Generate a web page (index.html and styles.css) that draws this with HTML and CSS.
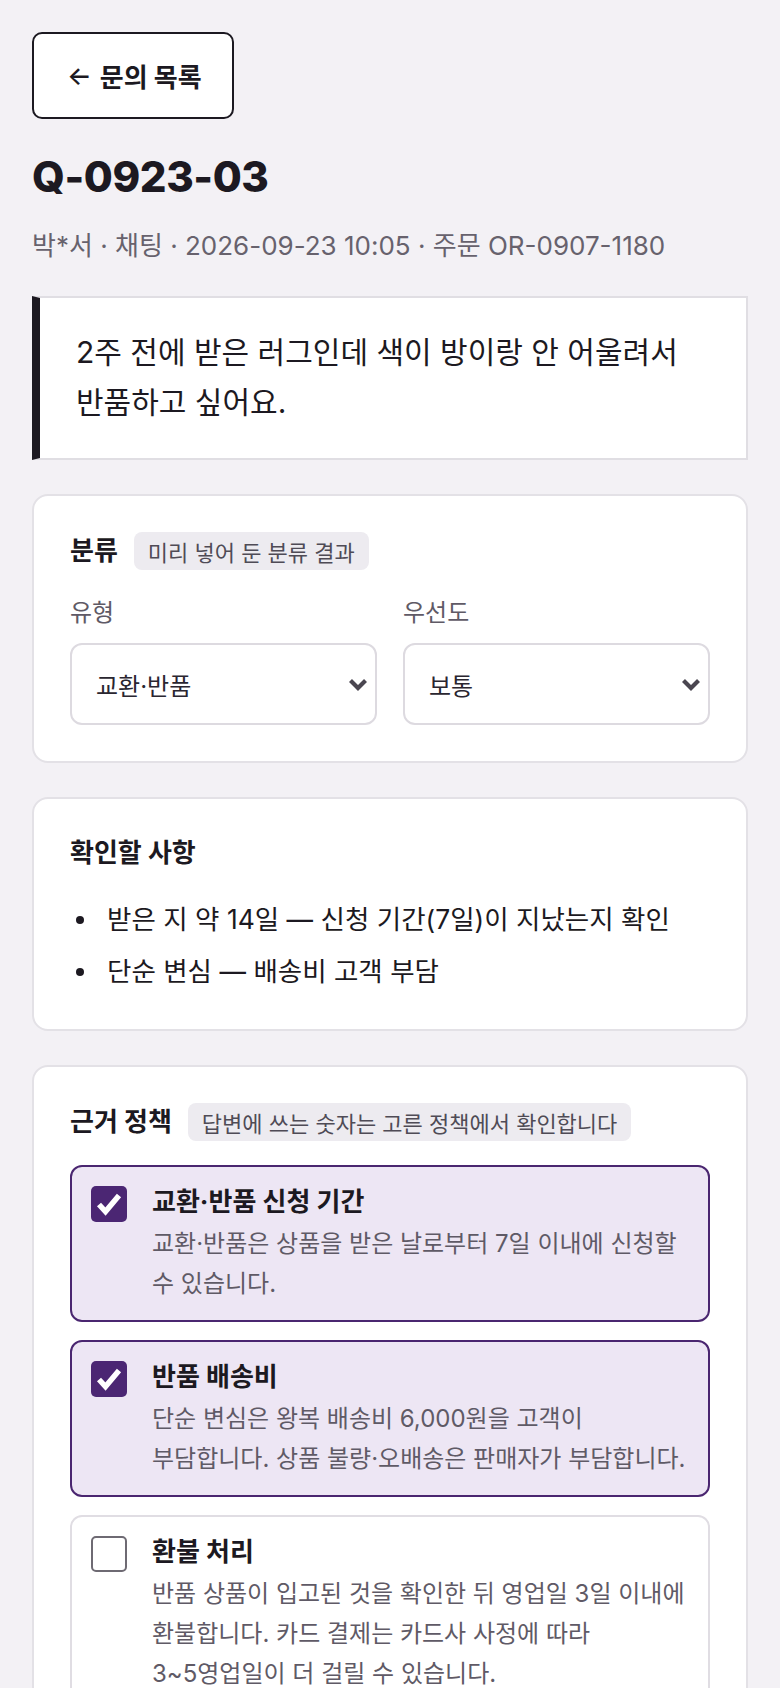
FILE: index.html
```html
<!DOCTYPE html>
<html lang="ko">
<head>
<meta charset="utf-8">
<title>Q-0923-03</title>
<link rel="stylesheet" href="styles.css">
</head>
<body>
<main class="page">
  <a class="back-btn" href="#"><span class="arrow">←</span> 문의 목록</a>
  <h1 class="ticket-id">Q-0923-03</h1>
  <p class="meta">박*서 · 채팅 · 2026-09-23 10:05 · 주문 OR-0907-1180</p>
  <blockquote class="message">2주 전에 받은 러그인데 색이 방이랑 안 어울려서 반품하고 싶어요.</blockquote>

  <section class="card">
    <div class="card-head">
      <h2 class="card-title">분류</h2>
      <span class="badge">미리 넣어 둔 분류 결과</span>
    </div>
    <div class="fields">
      <div class="field">
        <div class="field-label">유형</div>
        <div class="select">
          <span>교환·반품</span>
          <svg class="chev" width="20" height="13" viewBox="0 0 20 13"><polyline points="2.5,2.5 10,10 17.5,2.5" fill="none" stroke="#4a4650" stroke-width="4.2"/></svg>
        </div>
      </div>
      <div class="field">
        <div class="field-label">우선도</div>
        <div class="select">
          <span>보통</span>
          <svg class="chev" width="20" height="13" viewBox="0 0 20 13"><polyline points="2.5,2.5 10,10 17.5,2.5" fill="none" stroke="#4a4650" stroke-width="4.2"/></svg>
        </div>
      </div>
    </div>
  </section>

  <section class="card">
    <h2 class="card-title card-title-block">확인할 사항</h2>
    <ul class="checklist">
      <li>받은 지 약 14일 — 신청 기간(7일)이 지났는지 확인</li>
      <li>단순 변심 — 배송비 고객 부담</li>
    </ul>
  </section>

  <section class="card">
    <div class="card-head">
      <h2 class="card-title">근거 정책</h2>
      <span class="badge">답변에 쓰는 숫자는 고른 정책에서 확인합니다</span>
    </div>
    <div class="policies">
      <label class="policy is-checked">
        <span class="box"><svg width="36" height="36" viewBox="0 0 36 36"><polyline points="8,18.5 14.5,25.5 28,9.5" fill="none" stroke="#fff" stroke-width="5.5"/></svg></span>
        <span class="policy-body">
          <span class="policy-title">교환·반품 신청 기간</span>
          <span class="policy-desc">교환·반품은 상품을 받은 날로부터 7일 이내에 신청할 수 있습니다.</span>
        </span>
      </label>
      <label class="policy is-checked">
        <span class="box"><svg width="36" height="36" viewBox="0 0 36 36"><polyline points="8,18.5 14.5,25.5 28,9.5" fill="none" stroke="#fff" stroke-width="5.5"/></svg></span>
        <span class="policy-body">
          <span class="policy-title">반품 배송비</span>
          <span class="policy-desc">단순 변심은 왕복 배송비 6,000원을 고객이 부담합니다. 상품 불량·오배송은 판매자가 부담합니다.</span>
        </span>
      </label>
      <label class="policy">
        <span class="box"></span>
        <span class="policy-body">
          <span class="policy-title">환불 처리</span>
          <span class="policy-desc">반품 상품이 입고된 것을 확인한 뒤 영업일 3일 이내에 환불합니다. 카드 결제는 카드사 사정에 따라 3~5영업일이 더 걸릴 수 있습니다.</span>
        </span>
      </label>
    </div>
  </section>
</main>
</body>
</html>
```

FILE: styles.css
```css
* { box-sizing: border-box; }

html, body {
  margin: 0;
  padding: 0;
  background: #f3f1f5;
}

body {
  font-family: "Inter", "Noto Sans CJK KR", sans-serif;
  color: #1c1921;
  word-break: keep-all;
  overflow-wrap: break-word;
}

.page {
  display: flex;
  flex-direction: column;
  padding: 32px 32px 40px;
}

.back-btn {
  align-self: flex-start;
  display: inline-flex;
  align-items: center;
  gap: 8px;
  height: 87px;
  padding: 0 30px 0 33px;
  border: 2px solid #1c1921;
  border-radius: 10px;
  background: #fff;
  color: #1c1921;
  font-size: 26px;
  font-weight: 700;
  text-decoration: none;
}

.back-btn .arrow {
  font-weight: 500;
}

.ticket-id {
  margin: 33px 0 0;
  font-size: 42px;
  line-height: 50px;
  font-weight: 800;
  letter-spacing: -0.01em;
}

.meta {
  margin: 24px 0 0;
  font-size: 26px;
  line-height: 39px;
  color: #67626d;
}

.message {
  margin: 31px 0 0;
  padding: 29px 36px 31px;
  background: #fff;
  border: 2px solid #e0dee3;
  border-left: 8px solid #1c1921;
  font-size: 30px;
  line-height: 50px;
}

.card {
  margin-top: 34px;
  padding: 36px;
  background: #fff;
  border: 2px solid #e3e1e6;
  border-radius: 16px;
}

.card-head {
  display: flex;
  align-items: center;
  gap: 16px;
}

.card-title {
  margin: 0;
  font-size: 26px;
  line-height: 36px;
  font-weight: 700;
}

.card-title-block {
  margin-bottom: 26px;
}

.badge {
  display: inline-flex;
  align-items: center;
  height: 38px;
  padding: 0 14px;
  border-radius: 8px;
  background: #edebf0;
  color: #4f4b56;
  font-size: 22px;
}

.fields {
  display: grid;
  grid-template-columns: 1fr 1fr;
  gap: 26px;
  margin-top: 26px;
}

.field-label {
  font-size: 24px;
  line-height: 33px;
  color: #5f5a66;
  margin-bottom: 14px;
}

.select {
  display: flex;
  align-items: center;
  justify-content: space-between;
  height: 82px;
  padding: 0 7px 0 24px;
  border: 2px solid #dddae0;
  border-radius: 12px;
  background: #fff;
  font-size: 24px;
  color: #2a2630;
}

.chev {
  display: block;
}

.checklist {
  margin: 0;
  padding: 0;
  list-style: none;
  display: flex;
  flex-direction: column;
  gap: 8px;
}

.checklist li {
  display: flex;
  align-items: center;
  font-size: 26.5px;
  line-height: 44px;
}

.checklist li::before {
  content: "";
  flex: 0 0 8px;
  height: 8px;
  margin: 2px 23px 0 6px;
  border-radius: 50%;
  background: #1c1921;
}

.policies {
  display: flex;
  flex-direction: column;
  gap: 18px;
  margin-top: 24px;
}

.policy {
  display: flex;
  align-items: flex-start;
  gap: 25px;
  padding: 17px 20px 17px 19px;
  border: 2px solid #e0dde3;
  border-radius: 12px;
  background: #fff;
}

.policy.is-checked {
  border-color: #4a2670;
  background: #ede6f4;
}

.box {
  flex: 0 0 36px;
  width: 36px;
  height: 36px;
  margin-top: 2px;
  border: 2px solid #6e6a73;
  border-radius: 5px;
  background: #fff;
}

.box svg {
  display: block;
}

.is-checked .box {
  border: none;
  background: #4b2673;
}

.policy-body {
  display: flex;
  flex-direction: column;
  gap: 4px;
}

.policy-title {
  font-size: 26px;
  line-height: 36px;
  font-weight: 700;
}

.policy-desc {
  font-size: 24px;
  line-height: 39.6px;
  color: #5f5a66;
}
```
